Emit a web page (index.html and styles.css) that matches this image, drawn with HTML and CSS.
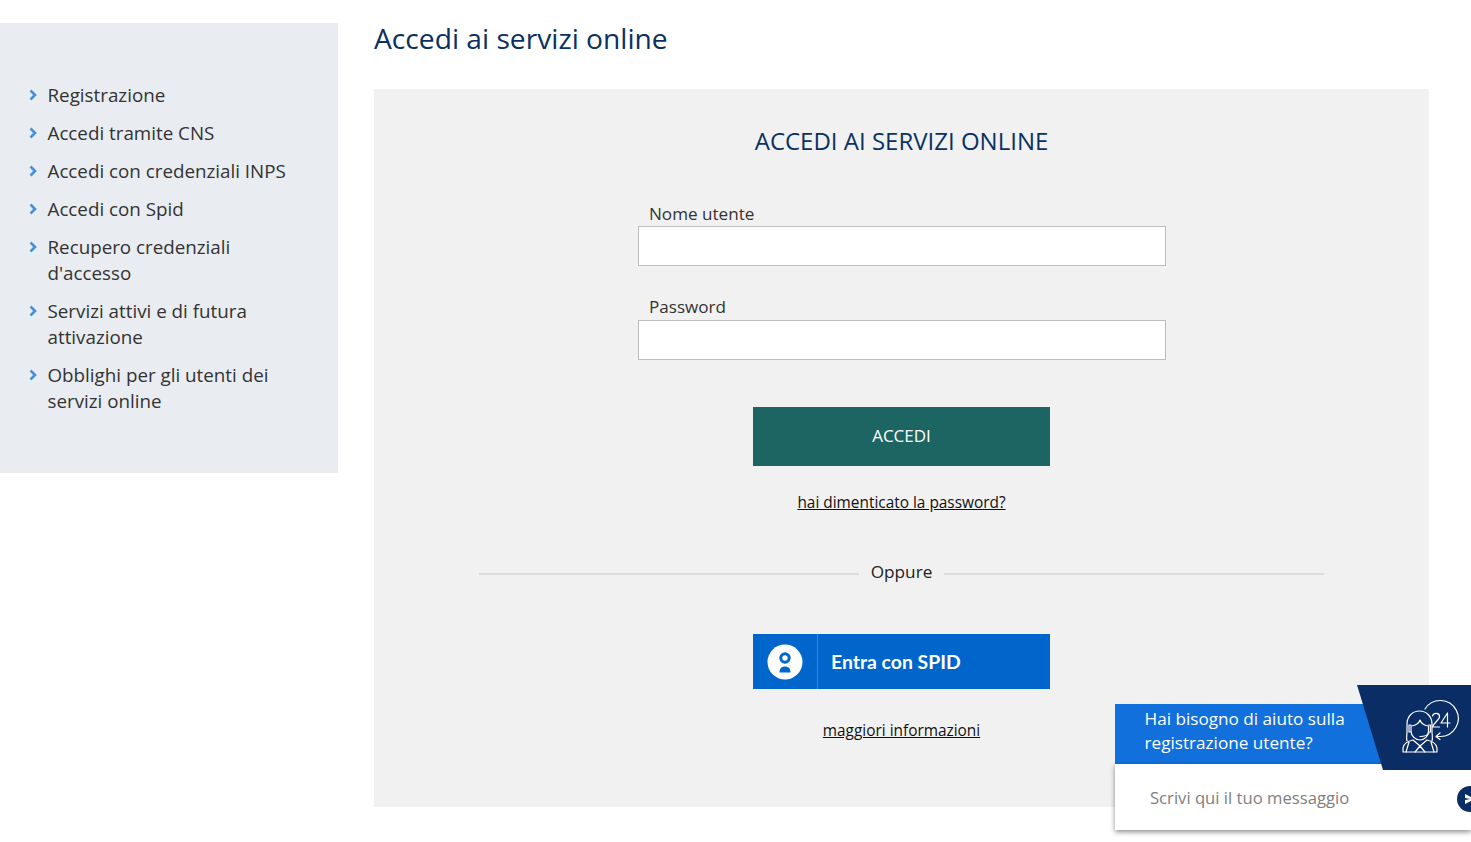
FILE: index.html
```html
<!DOCTYPE html>
<html lang="it">
<head>
<meta charset="utf-8">
<title>Accedi ai servizi online</title>
<link rel="stylesheet" href="styles.css">
</head>
<body>
<div class="page">
  <aside class="sidebar">
    <ul class="nav">
      <li><svg class="chev" viewBox="0 0 8 12"><path d="M1.500 1.500 6 6l-4.500 4.500"/></svg><a>Registrazione</a></li>
      <li><svg class="chev" viewBox="0 0 8 12"><path d="M1.500 1.500 6 6l-4.500 4.500"/></svg><a>Accedi tramite CNS</a></li>
      <li><svg class="chev" viewBox="0 0 8 12"><path d="M1.500 1.500 6 6l-4.500 4.500"/></svg><a>Accedi con credenziali INPS</a></li>
      <li><svg class="chev" viewBox="0 0 8 12"><path d="M1.500 1.500 6 6l-4.500 4.500"/></svg><a>Accedi con Spid</a></li>
      <li><svg class="chev" viewBox="0 0 8 12"><path d="M1.500 1.500 6 6l-4.500 4.500"/></svg><a>Recupero credenziali<br>d'accesso</a></li>
      <li><svg class="chev" viewBox="0 0 8 12"><path d="M1.500 1.500 6 6l-4.500 4.500"/></svg><a>Servizi attivi e di futura<br>attivazione</a></li>
      <li><svg class="chev" viewBox="0 0 8 12"><path d="M1.500 1.500 6 6l-4.500 4.500"/></svg><a>Obblighi per gli utenti dei<br>servizi online</a></li>
    </ul>
  </aside>
  <main class="main">
    <h1 class="title">Accedi ai servizi online</h1>
    <section class="card">
      <h2 class="card-title">ACCEDI AI SERVIZI ONLINE</h2>
      <form class="form">
        <label class="label">Nome utente</label>
        <input class="input" type="text">
        <label class="label second">Password</label>
        <input class="input" type="password">
      </form>
      <button class="btn-accedi" type="button">ACCEDI</button>
      <a class="link link-forgot">hai dimenticato la password?</a>
      <div class="divider"><span>Oppure</span></div>
      <button class="btn-spid" type="button">
        <span class="spid-icon">
          <svg viewBox="0 0 36 36" width="36" height="36"><circle cx="18" cy="18" r="17.500" fill="#fff"/><circle cx="18" cy="14" r="4.200" fill="none" stroke="#0066cc" stroke-width="3"/><path d="M12.500 28.500c0-4 2-6 5.500-6s5.500 2 5.500 6z" fill="#0066cc"/></svg>
        </span>
        <span class="spid-text">Entra con SPID</span>
      </button>
      <a class="link link-more">maggiori informazioni</a>
    </section>
  </main>
</div>
<div class="chat">
  <div class="chat-head">Hai bisogno di aiuto sulla<br>registrazione utente?</div>
  <div class="chat-body">
    <span class="chat-placeholder">Scrivi qui il tuo messaggio</span>
    <span class="chat-send"><svg viewBox="0 0 26 26" width="26" height="26"><path d="M8 8l10 5-10 5v-4l5.500-1-5.500-1z" fill="#fff"/></svg></span>
  </div>
  <div class="chat-badge">
    <svg viewBox="0 0 70 65" width="70" height="65" fill="none" stroke="#fff" stroke-width="1.200" stroke-linecap="round" stroke-linejoin="round">
      <path d="M30 14A18 18 0 1 1 45 41.500H41m0 0 4-3.500m-4 3.500 4 3"/>
      <path d="M37.500 21c1-3.500 7-3.500 7 .5 0 3.500-6 6.500-7 10.500h7"/>
      <path d="M52.500 18l-6.500 10h9M52.500 18v14"/>
      <path d="M12 46c-1-3 0-6 0-9v-8c0-8 6-13 12.500-13S37 21 37 29v8c0 3 1 6 0 9"/>
      <path d="M16 31c4 0 8-2.500 9-6 1 3.500 5 6 8.500 6v5c0 5-4 9-8.500 9S16 41 16 36z"/>
      <path d="M16 30h-2v7h2M33.500 30h2v7h-2"/>
      <path d="M34 38c-1.500 2.500-5 3.500-9 3.500"/>
      <path d="M8 57v-4c0-4 5-7 10-8l7 6 7-6c5 1 10 4 10 8v4z"/>
      <path d="M14 47l-3 10M36 47l3 10M20 57l5-6 5 6"/>
    </svg>
  </div>
</div>
</body>
</html>
```
FILE: styles.css
```css
* { box-sizing: border-box; }
html, body { margin: 0; padding: 0; height: 100%; }
body {
  position: relative;
  overflow: hidden;
  background: #fff;
  font-family: "Open Sans", "Liberation Sans", sans-serif;
  color: #1a1a1a;
}
.page { display: flex; align-items: flex-start; padding-right: 42px; gap: 36px; }
.sidebar {
  flex: 0 0 338px;
  height: 450px;
  margin-top: 23px;
  padding: 59px 20px 0 29px;
  background: #e9ecf1;
}
.nav { list-style: none; margin: 0; padding: 0; display: flex; flex-direction: column; gap: 12px; }
.nav li { display: flex; align-items: flex-start; font-size: 18.800px; line-height: 26px; color: #333; }
.chev { flex: 0 0 8px; width: 8px; height: 12px; margin-top: 7px; margin-right: 10.500px; fill: none; stroke: #4a90d9; stroke-width: 2.600; }
.main { flex: 1; min-width: 0; }
.title { margin: 0; height: 89px; padding-top: 15.500px; font-size: 28.200px; line-height: 44px; font-weight: 400; color: #0a3161; }
.card {
  height: 718px;
  background: #f1f1f1;
  display: flex;
  flex-direction: column;
  align-items: center;
  padding-top: 33px;
}
.card-title { margin: 0; font-size: 24px; line-height: 38px; font-weight: 400; color: #0a3161; }
.form { width: 528px; margin-top: 41.500px; display: flex; flex-direction: column; }
.label { padding-left: 11.500px; font-size: 17.100px; line-height: 24px; color: #333; }
.label.second { margin-top: 29px; height: 25px; }
.input { width: 100%; height: 40px; border: 1px solid #bdbdbd; background: #fff; display: block; }
.btn-accedi {
  width: 297px;
  height: 59px;
  margin-top: 47.500px;
  padding: 0 0 2px;
  border: 0;
  background: #1d6563;
  color: #fff;
  font: 400 17px "Open Sans", sans-serif;
}
.link { color: #111; text-decoration: underline; font-size: 15.400px; line-height: 22px; }
.link-forgot { margin-top: 26px; }
.divider {
  width: 845px;
  margin-top: 45px;
  height: 26px;
  display: flex;
  align-items: center;
  justify-content: center;
  background: linear-gradient(#dcdcdc, #dcdcdc) 0 14px / 100% 2px no-repeat;
}
.divider span { background: #f1f1f1; padding: 0 12px; font-size: 17.200px; line-height: 26px; color: #222; }
.btn-spid {
  width: 297px;
  height: 55px;
  margin-top: 49px;
  padding: 0;
  border: 0;
  background: #0066cc;
  color: #fff;
  display: flex;
  align-items: stretch;
}
.spid-icon { flex: 0 0 65px; display: flex; align-items: center; justify-content: center; border-right: 1px solid #3a86d6; }
.spid-text { padding-left: 13px; font: 700 19.400px/56px "Lato", sans-serif; }
.link-more { margin-top: 31px; }
.chat { position: absolute; left: 1115px; top: 685px; width: 356px; height: 145px; }
.chat-head {
  position: absolute;
  left: 0; top: 19px;
  width: 280px; height: 60px;
  padding: 3px 0 0 29.500px;
  background: linear-gradient(73deg, #1170dc calc(100% - 30px), #0c56b0 100%);
  color: #fff;
  font-size: 17.150px;
  line-height: 24px;
}
.chat-badge {
  position: absolute;
  right: 0; top: 0;
  width: 114px; height: 85px;
  background: #0a2d66;
  clip-path: polygon(0 0, 100% 0, 100% 100%, 26px 100%);
  display: flex;
  align-items: flex-start;
  justify-content: flex-end;
  padding: 10px 6px 0 0;
}
.chat-body {
  position: absolute;
  left: 0; top: 79px;
  width: 356px; height: 66px;
  background: #fff;
  box-shadow: 0 2px 5px rgba(0,0,0,.45);
  display: flex;
  align-items: center;
  padding-left: 35px;
  clip-path: inset(-10px 0 -10px -10px);
}
.chat-placeholder { font-size: 16.650px; color: #808080; }
.chat-send { position: absolute; left: 342px; top: 22px; width: 26px; height: 26px; border-radius: 50%; background: #0a2d66; }
```
